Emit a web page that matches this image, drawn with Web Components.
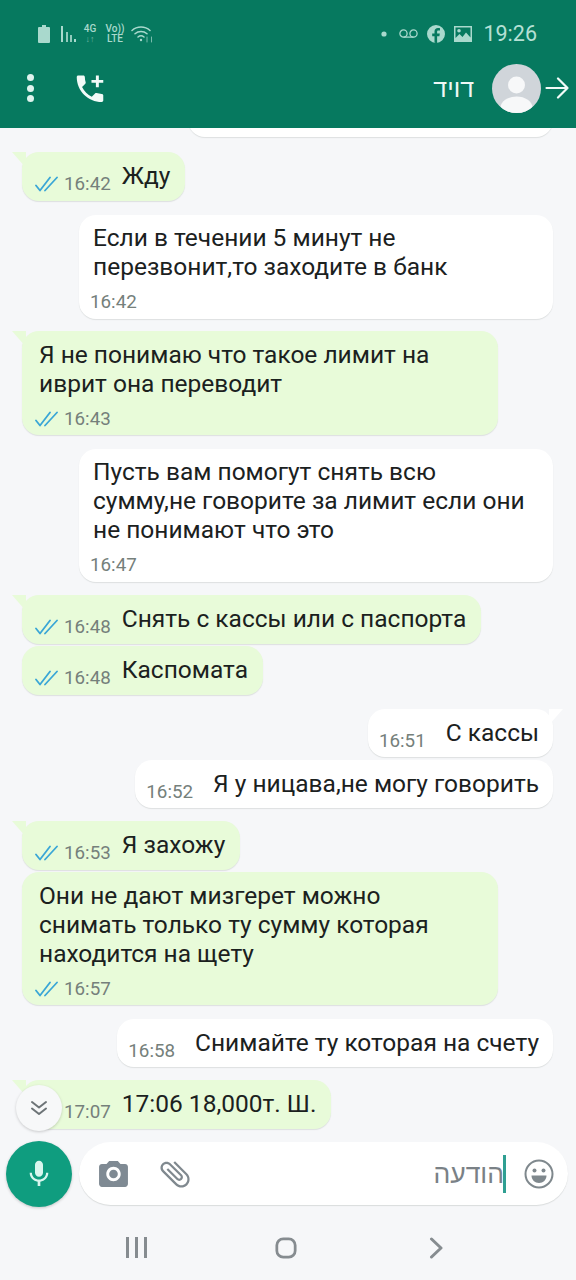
<!DOCTYPE html>
<html lang="ru">
<head>
<meta charset="utf-8">
<title>Chat</title>
<style>
  html, body { margin: 0; height: 100%; overflow: hidden; }
  body { font-family: Roboto, "Liberation Sans", sans-serif; }
</style>
</head>
<body>
<chat-app>
  <status-bar slot="status"></status-bar>
  <chat-toolbar slot="toolbar" name="דויד"></chat-toolbar>
  <chat-bubble side="me" time="16:42" width="365" clipped></chat-bubble>
  <chat-bubble side="them" time="16:42" tail gap="15">Жду</chat-bubble>
  <chat-bubble side="me" time="16:42" width="474" stack gap="14">Если в течении 5 минут не<br>перезвонит,то заходите в банк</chat-bubble>
  <chat-bubble side="them" time="16:43" width="476" stack tail gap="12">Я не понимаю что такое лимит на<br>иврит она переводит</chat-bubble>
  <chat-bubble side="me" time="16:47" width="474" stack gap="14">Пусть вам помогут снять всю<br>сумму,не говорите за лимит если они<br>не понимают что это</chat-bubble>
  <chat-bubble side="them" time="16:48" tail gap="13">Снять с кассы или с паспорта</chat-bubble>
  <chat-bubble side="them" time="16:48" gap="2">Каспомата</chat-bubble>
  <chat-bubble side="me" time="16:51" tail gap="14">С кассы</chat-bubble>
  <chat-bubble side="me" time="16:52" gap="3">Я у ницава,не могу говорить</chat-bubble>
  <chat-bubble side="them" time="16:53" tail gap="13">Я захожу</chat-bubble>
  <chat-bubble side="them" time="16:57" width="476" stack gap="2">Они не дают мизгерет можно<br>снимать только ту сумму которая<br>находится на щету</chat-bubble>
  <chat-bubble side="me" time="16:58" gap="14">Снимайте ту которая на счету</chat-bubble>
  <chat-bubble side="them" time="17:07" tail gap="13">17:06 18,000т. Ш.</chat-bubble>
  <scroll-button slot="overlay"></scroll-button>
  <chat-composer slot="composer" hint="הודעה"></chat-composer>
  <nav-bar slot="nav"></nav-bar>
</chat-app>

<script>
class ChatApp extends HTMLElement {
  constructor() {
    super();
    this.attachShadow({ mode: 'open' });
  }

  connectedCallback() {
    this.shadowRoot.innerHTML = `
      <style>
        :host { display: flex; flex-direction: column; position: relative; width: 576px; height: 1280px; overflow: hidden; background: #f6f7f9; color: #1c2320; }
        .list { flex: 1; min-height: 0; overflow: hidden; display: flex; flex-direction: column; }
      </style>
      <slot name="status"></slot>
      <slot name="toolbar"></slot>
      <div class="list"><slot></slot></div>
      <slot name="composer"></slot>
      <slot name="nav"></slot>
      <slot name="overlay"></slot>
    `;
  }
}

class StatusBar extends HTMLElement {
  constructor() {
    super();
    this.attachShadow({ mode: 'open' });
  }

  connectedCallback() {
    this.shadowRoot.innerHTML = `
      <style>
        :host { display: flex; align-items: center; height: 64px; box-sizing: border-box; padding: 3px 39px 0 38px; background: #06795f; color: #a9d9cd; }
        svg { display: block; fill: currentColor; }
        .group { display: flex; align-items: center; }
        .spacer { flex: 1; }
        .tiny { font: 500 10px/10px Roboto, sans-serif; text-align: center; }
        .tiny small { display: block; font-size: 9px; opacity: .6; }
        .clock { font: 400 21.500px/24px Roboto, sans-serif; margin-left: 11px; color: #b5e0d5; }
      </style>
      <div class="group">
        <svg width="12" height="18" viewBox="0 0 12 18"><path d="M4 0h4v2h3a1 1 0 0 1 1 1v14a1 1 0 0 1-1 1H1a1 1 0 0 1-1-1V3a1 1 0 0 1 1-1h3z"/></svg>
        <svg style="margin-left:11px" width="16" height="16" viewBox="0 0 16 16"><rect x="0" y="0" width="2" height="16"/><rect x="5" y="6" width="2" height="10" opacity=".85"/><rect x="9" y="9" width="2" height="7" opacity=".85"/><rect x="13" y="13" width="2" height="3"/></svg>
        <div class="tiny" style="margin-left:6px;width:14px">4G<small>↓↑</small></div>
        <div class="tiny" style="margin-left:8px;width:20px">Vo))<br>LTE</div>
        <svg style="margin-left:6px" width="23" height="18" viewBox="0 0 23 18" fill="none" stroke="currentColor" stroke-width="1.500" stroke-linecap="round"><path fill="none" d="M1 5.500C6 .8 14 .8 19 5.500M4 8.800c3.400-3 8.600-3 12 0M7 12c1.800-1.500 4.200-1.500 6 0"/><circle cx="10" cy="15" r="1.200" fill="currentColor" stroke="none"/><path fill="none" stroke-width="1" opacity=".7" d="M16 12v5M20.500 12v5"/></svg>
      </div>
      <div class="spacer"></div>
      <div class="group">
        <svg width="6" height="6" viewBox="0 0 6 6"><circle cx="3" cy="3" r="2.600"/></svg>
        <svg style="margin-left:12px" width="19" height="10" viewBox="0 0 19 10" fill="none" stroke="currentColor" stroke-width="1.300"><circle style="fill:none" cx="4.500" cy="4.500" r="3.600"/><circle style="fill:none" cx="14.500" cy="4.500" r="3.600"/><path style="fill:none" d="M4.500 8.100h10"/></svg>
        <svg style="margin-left:9px" width="18" height="18" viewBox="0 0 18 18"><path fill-rule="evenodd" d="M9 0a9 9 0 1 1 0 18A9 9 0 0 1 9 0zm1.100 18v-6.800h2.300l.4-2.700h-2.700V6.900c0-.8.3-1.300 1.400-1.300H13V3.200c-.3 0-1.100-.1-2-.1-2.100 0-3.500 1.200-3.500 3.500v1.900H5.200v2.700h2.300V18z"/></svg>
        <svg style="margin-left:9px" width="18" height="16" viewBox="0 0 18 16"><path fill-rule="evenodd" d="M0 0h18v16H0zm1.500 1.500V12l4-4 3 3 3.500-4.500 4.500 5V1.500zM5 3a1.800 1.800 0 1 1 0 3.600A1.800 1.800 0 0 1 5 3z"/></svg>
        <span class="clock">19:26</span>
      </div>
    `;
  }
}

class ChatToolbar extends HTMLElement {
  constructor() {
    super();
    this.attachShadow({ mode: 'open' });
  }

  connectedCallback() {
    const name = this.getAttribute('name');
    this.shadowRoot.innerHTML = `
      <style>
        :host { display: flex; align-items: center; height: 64px; box-sizing: border-box; padding: 0 7px 16px 27px; background: #06795f; color: #fff; }
        .dots { display: flex; flex-direction: column; gap: 3.500px; width: 7px; }
        .dots i { width: 7px; height: 7px; border-radius: 50%; background: #dff3ee; }
        .call { margin-left: 42px; display: block; }
        .spacer { flex: 1; }
        .name { font: 400 25px/30px "Liberation Sans", sans-serif; color: #eef8f5; direction: rtl; }
        .avatar { margin-left: 18px; display: block; }
        .back { margin-left: 4px; display: block; }
      </style>
      <div class="dots"><i></i><i></i><i></i></div>
      <svg class="call" width="28" height="28" viewBox="3 2 18 19" fill="#f2fbf8"><path d="M20 15.500c-1.250 0-2.450-.2-3.570-.57-.35-.11-.74-.03-1.020.24l-2.200 2.200c-2.830-1.440-5.150-3.750-6.590-6.590l2.200-2.210c.28-.26.36-.65.25-1C8.700 6.450 8.500 5.250 8.500 4c0-.55-.45-1-1-1H4c-.55 0-1 .45-1 1 0 9.390 7.610 17 17 17 .55 0 1-.45 1-1v-3.500c0-.55-.45-1-1-1zM21 6h-3V3h-2v3h-3v2h3v3h2V8h3z"/></svg>
      <div class="spacer"></div>
      <div class="name">${name}</div>
      <svg class="avatar" width="49" height="49" viewBox="0 0 49 49"><defs><clipPath id="c"><circle cx="24.500" cy="24.500" r="24.500"/></clipPath></defs><circle cx="24.500" cy="24.500" r="24.500" fill="#d0d5da"/><g clip-path="url(#c)" fill="#f7f8f9"><circle cx="24.500" cy="21" r="8.500"/><ellipse cx="24.500" cy="44" rx="16" ry="11.500"/></g></svg>
      <svg class="back" width="24" height="22" viewBox="0 0 24 22" fill="none" stroke="#f2fbf8" stroke-width="2.200" stroke-linecap="round" stroke-linejoin="round"><path d="M1.500 11h21M13 1.500 22.500 11 13 20.500"/></svg>
    `;
  }
}

class ChatBubble extends HTMLElement {
  constructor() {
    super();
    this.attachShadow({ mode: 'open' });
  }

  getChecks() {
    return `<svg class="checks" width="23" height="16" viewBox="0 0 23 16" fill="none" stroke="#3aa6d6" stroke-width="1.800" stroke-linecap="round" stroke-linejoin="round"><path d="M1 9.500l4 5L15 1.500M10 14.500 22 1.500"/></svg>`;
  }

  getStyles() {
    const width = this.getAttribute('width');
    const gap = this.getAttribute('gap') || 14;
    const margin = this.hasAttribute('clipped') ? -39 : gap;
    return `
      <style>
        :host { display: block; position: relative; flex: none; box-sizing: border-box; margin-top: ${margin}px; min-height: 48px; border-radius: 17px; font: 400 24.500px/29px Roboto, sans-serif; color: #1b211e; box-shadow: 0 1px 1px rgba(40, 60, 50, .12); ${width ? `width: ${width}px;` : ''} }
        :host([side="them"]) { align-self: flex-start; margin-left: 22px; background: #e8fbd9; padding: 10px 15px 6px 13px; }
        :host([side="me"]) { align-self: flex-end; margin-right: 23px; background: #fff; padding: 10px 14px 5px 11px; }
        :host([stack]) { padding-top: 8px; padding-bottom: 6px; }
        :host([stack][side="them"]) { padding-top: 9px; padding-bottom: 5px; }
        .inline { display: flex; align-items: flex-start; gap: 11px; }
        :host([side="me"]) .inline { gap: 20px; }
        .inline .text { margin-top: -1px; }
        .stack .text { padding-left: 4px; }
        :host([side="me"]) .stack .text { padding-left: 3px; }
        .stack .meta { margin-top: 10px; }
        .inline .meta { margin-top: 11px; }
        .text { white-space: nowrap; }
        .meta { display: flex; align-items: center; gap: 6px; height: 22px; font: 400 18.800px/22px Roboto, sans-serif; color: #75807b; }
        .checks { display: block; }
        .tail { position: absolute; top: 0; width: 14px; height: 16px; background: inherit; }
        :host([side="them"]) .tail { left: -10px; clip-path: polygon(0 0, 100% 0, 100% 100%); }
        :host([side="me"]) .tail { right: -10px; clip-path: polygon(0 0, 100% 0, 0 100%); }
      </style>
    `;
  }

  connectedCallback() {
    const read = this.getAttribute('side') === 'them';
    const tail = this.hasAttribute('tail') ? '<div class="tail"></div>' : '';
    const meta = `<div class="meta">${read ? this.getChecks() : ''}<span>${this.getAttribute('time')}</span></div>`;
    const text = '<div class="text"><slot></slot></div>';
    this.shadowRoot.innerHTML = `
      ${this.getStyles()}
      ${tail}
      ${this.hasAttribute('stack')
        ? `<div class="stack">${text}${meta}</div>`
        : `<div class="inline">${meta}${text}</div>`}
    `;
  }
}

class ScrollButton extends HTMLElement {
  constructor() {
    super();
    this.attachShadow({ mode: 'open' });
  }

  connectedCallback() {
    // sits over the last bubble, so this one stays absolute
    this.shadowRoot.innerHTML = `
      <style>
        :host { position: absolute; left: 16px; top: 1085px; width: 46px; height: 46px; border-radius: 50%; background: #f7f8f9; box-shadow: 0 1px 3px rgba(0, 0, 0, .18); display: flex; align-items: center; justify-content: center; }
        svg { display: block; }
      </style>
      <svg width="18" height="16" viewBox="0 0 18 16" fill="none" stroke="#6d7477" stroke-width="2" stroke-linecap="round" stroke-linejoin="round"><path d="M2 2l7 5.500L16 2M2 8.500l7 5.500 7-5.500"/></svg>
    `;
  }
}

class ChatComposer extends HTMLElement {
  constructor() {
    super();
    this.attachShadow({ mode: 'open' });
  }

  connectedCallback() {
    this.shadowRoot.innerHTML = `
      <style>
        :host { display: flex; align-items: flex-start; gap: 7px; height: 66px; box-sizing: border-box; padding: 0 8px 0 6px; }
        .mic { flex: none; width: 66px; height: 66px; border-radius: 50%; background: #0f9d7f; box-shadow: 0 1px 3px rgba(0, 0, 0, .2); display: flex; align-items: center; justify-content: center; }
        .pill { flex: 1; height: 63px; margin-top: 1px; border-radius: 32px; background: #fff; box-shadow: 0 1px 1px rgba(40, 60, 50, .14); display: flex; align-items: center; box-sizing: border-box; padding: 0 14px 0 20px; }
        svg { display: block; flex: none; }
        .clip { margin-left: 29px; transform: rotate(-45deg); }
        .spacer { flex: 1; }
        .hint { font: 400 26.500px/30px "Liberation Sans", sans-serif; color: #7a8186; direction: rtl; }
        .caret { width: 3px; height: 38px; background: #2f9f92; margin-left: -1px; }
        .smile { margin-left: 18px; }
      </style>
      <div class="mic">
        <svg width="32" height="32" viewBox="0 0 24 24" fill="#d8f6ee"><path d="M12 14c1.660 0 3-1.340 3-3V5c0-1.660-1.340-3-3-3S9 3.340 9 5v6c0 1.660 1.340 3 3 3zm5.300-3c0 3-2.540 5.100-5.300 5.100S6.700 14 6.700 11H5c0 3.410 2.720 6.230 6 6.720V21h2v-3.280c3.280-.49 6-3.310 6-6.720h-1.700z"/></svg>
      </div>
      <div class="pill">
        <svg width="29" height="26" viewBox="2 2 20 18" fill="#7f8a93"><circle cx="12" cy="11" r="3"/><path d="M9 2 7.170 4H4c-1.100 0-2 .9-2 2v12c0 1.100.9 2 2 2h16c1.100 0 2-.9 2-2V6c0-1.100-.9-2-2-2h-3.170L15 2H9zm3 14c-2.760 0-5-2.240-5-5s2.240-5 5-5 5 2.240 5 5-2.240 5-5 5z"/></svg>
        <svg class="clip" width="36" height="36" viewBox="0 0 24 24" fill="#80898f"><path d="M16.500 6v11.500c0 2.210-1.790 4-4 4s-4-1.790-4-4V5c0-1.380 1.120-2.500 2.500-2.500s2.500 1.120 2.500 2.500v10.500c0 .55-.45 1-1 1s-1-.45-1-1V6H10v9.500c0 1.380 1.120 2.500 2.500 2.500s2.500-1.120 2.500-2.500V5c0-2.210-1.790-4-4-4S7 2.790 7 5v12.500c0 3.040 2.460 5.500 5.500 5.500s5.500-2.460 5.500-5.500V6h-1.500z"/></svg>
        <div class="spacer"></div>
        <div class="hint">${this.getAttribute('hint')}</div>
        <div class="caret"></div>
        <svg class="smile" width="30" height="30" viewBox="0 0 30 30"><circle cx="15" cy="15" r="13.500" fill="none" stroke="#7f888d" stroke-width="2"/><circle cx="10.500" cy="11.500" r="2" fill="#7f888d"/><circle cx="19.500" cy="11.500" r="2" fill="#7f888d"/><path d="M7.500 16.500h15c0 4.500-3.400 7.500-7.500 7.500s-7.500-3-7.500-7.500z" fill="#7f888d"/></svg>
      </div>
    `;
  }
}

class NavBar extends HTMLElement {
  constructor() {
    super();
    this.attachShadow({ mode: 'open' });
  }

  connectedCallback() {
    this.shadowRoot.innerHTML = `
      <style>
        :host { display: grid; grid-template-columns: repeat(3, 150px); justify-content: center; justify-items: center; align-items: center; height: 73px; box-sizing: border-box; padding: 8px 4px 0 0; }
        svg { display: block; }
      </style>
      <svg width="21" height="21" viewBox="0 0 21 21" fill="#868c90"><rect x="0" y="0" width="3" height="21"/><rect x="9" y="0" width="3" height="21"/><rect x="18" y="0" width="3" height="21"/></svg>
      <svg width="22" height="22" viewBox="0 0 24 24" fill="none" stroke="#868c90" stroke-width="3"><rect x="2" y="2" width="20" height="20" rx="7"/></svg>
      <svg width="15" height="22" viewBox="0 0 15 22" fill="none" stroke="#868c90" stroke-width="3" stroke-linecap="round" stroke-linejoin="round"><path d="M2.500 2 12 11 2.500 20"/></svg>
    `;
  }
}

customElements.define('chat-app', ChatApp);
customElements.define('status-bar', StatusBar);
customElements.define('chat-toolbar', ChatToolbar);
customElements.define('chat-bubble', ChatBubble);
customElements.define('scroll-button', ScrollButton);
customElements.define('chat-composer', ChatComposer);
customElements.define('nav-bar', NavBar);
</script>
</body>
</html>
